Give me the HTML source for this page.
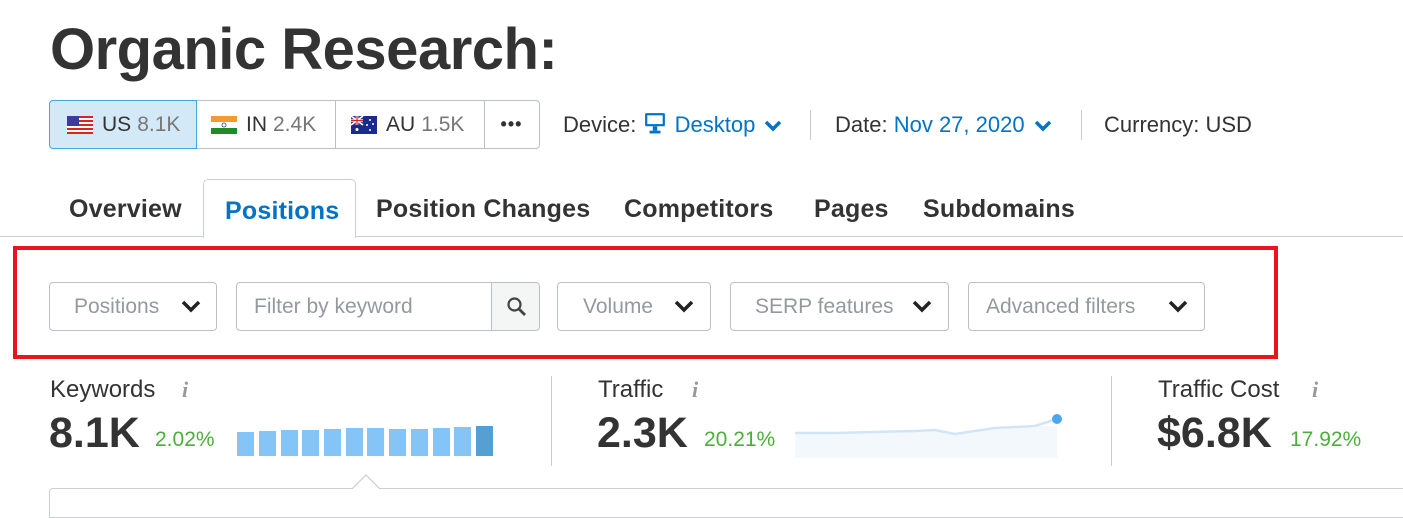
<!DOCTYPE html>
<html><head><meta charset="utf-8"><style>
*{box-sizing:border-box;margin:0;padding:0}
body{width:1403px;height:508px;overflow:hidden;background:#fff;font-family:"Liberation Sans",sans-serif;color:#333;position:relative}
.a{position:absolute;white-space:nowrap}
.seg{position:absolute;top:100px;height:49px;border:1px solid #b8c2c6;display:flex;align-items:center;font-size:21px;color:#333}
.seg .g{color:#777;margin-left:6px}
.flag{width:26px;height:18px;margin-right:9px;display:inline-block}
.tab{position:absolute;top:195px;font-size:25px;font-weight:bold;color:#333;letter-spacing:.2px}
.f{position:absolute;top:282px;height:49px;border:1px solid #b8c2c6;border-radius:4px;font-size:21px;color:#939a9e;display:flex;align-items:center;padding-left:24px}
.chev{position:absolute;top:15px}
.lbl{font-size:24px;color:#333}
.big{font-size:43px;font-weight:bold;color:#333}
.pct{font-size:21px;color:#4cae3a}
.info{font-family:"Liberation Serif",serif;font-style:italic;font-weight:bold;color:#999;font-size:22px}
.ic{vertical-align:-1px;margin-left:8px}
</style></head><body>
<div class="a" style="left:50px;top:16px;font-size:58px;font-weight:bold;color:#333;letter-spacing:-0.5px">Organic Research:</div>

<div class="seg" style="left:49px;width:148px;background:#d4e9f7;border-color:#4aa3df;border-radius:4px 0 0 4px;padding-left:17px;z-index:2">
<svg class="flag" viewBox="0 0 26 18"><rect width="26" height="18" fill="#fff"/><g fill="#d22">
<rect y="0" width="26" height="2"/><rect y="4" width="26" height="2"/><rect y="8" width="26" height="2"/><rect y="12" width="26" height="2"/><rect y="16" width="26" height="2"/></g><rect width="12" height="10" fill="#3c3b9e"/></svg>US<span class="g">8.1K</span></div>
<div class="seg" style="left:196px;width:140px;padding-left:15px;border-left:none">
<svg class="flag" viewBox="0 0 26 18"><rect width="26" height="6" fill="#f49a2f"/><rect y="6" width="26" height="6" fill="#fff"/><rect y="12" width="26" height="6" fill="#1f8a2a"/><circle cx="13" cy="9" r="2" fill="none" stroke="#2a3f9a" stroke-width=".8"/></svg>IN<span class="g">2.4K</span></div>
<div class="seg" style="left:335px;width:150px;padding-left:16px;border-left:none">
<svg class="flag" viewBox="0 0 26 18"><rect width="26" height="18" fill="#1a2b8f"/><rect width="12" height="9" fill="#2b3a9c"/><path d="M0 0L12 9M12 0L0 9" stroke="#fff" stroke-width="1.6"/><path d="M6 0V9M0 4.5H12" stroke="#fff" stroke-width="2.5"/><path d="M6 0V9M0 4.5H12" stroke="#d22" stroke-width="1.2"/><g fill="#fff"><circle cx="6" cy="13.5" r="1.5"/><circle cx="19" cy="4" r="1"/><circle cx="22" cy="8" r="1"/><circle cx="19" cy="14" r="1"/><circle cx="16" cy="9" r="1"/></g></svg>AU<span class="g">1.5K</span></div>
<div class="seg" style="left:484px;width:56px;border-left:none;border-radius:0 4px 4px 0;justify-content:center;font-weight:bold;font-size:18px;letter-spacing:1px">•••</div>

<div class="a" style="left:563px;top:112px;font-size:22px;color:#333">Device: <svg width="22" height="22" viewBox="0 0 20 20" style="vertical-align:-2px;margin:0 2px"><rect x="1" y="1" width="18" height="12" rx="1" fill="#0073c6"/><rect x="3" y="3" width="14" height="8" fill="#fff"/><rect x="8" y="13" width="4" height="4" fill="#0073c6"/><rect x="5" y="17" width="10" height="2.5" fill="#0073c6"/></svg> <span style="color:#0073c6">Desktop</span><svg class="ic" width="20" height="14" viewBox="0 0 20 14"><path d="M3 3l7 7 7-7" fill="none" stroke="#0073c6" stroke-width="3.5"/></svg></div>
<div class="a" style="left:810px;top:110px;width:1px;height:30px;background:#ccc"></div>
<div class="a" style="left:835px;top:112px;font-size:22px">Date: <span style="color:#0073c6">Nov 27, 2020</span><svg class="ic" width="20" height="14" viewBox="0 0 20 14"><path d="M3 3l7 7 7-7" fill="none" stroke="#0073c6" stroke-width="3.5"/></svg></div>
<div class="a" style="left:1081px;top:110px;width:1px;height:30px;background:#ccc"></div>
<div class="a" style="left:1104px;top:112px;font-size:22px">Currency: USD</div>

<div class="a" style="left:0;top:236px;width:1403px;height:1px;background:#c9d0d3"></div>
<div class="a" style="left:203px;top:179px;width:153px;height:59px;border:1px solid #c9d0d3;border-bottom:none;border-radius:5px 5px 0 0;background:#fff"></div>
<div class="tab" style="left:69px">Overview</div>
<div class="tab" style="left:225px;color:#0073c6;top:197px">Positions</div>
<div class="tab" style="left:376px">Position Changes</div>
<div class="tab" style="left:624px">Competitors</div>
<div class="tab" style="left:814px">Pages</div>
<div class="tab" style="left:923px">Subdomains</div>

<div class="a" style="left:13px;top:246px;width:1265px;height:113px;border:4px solid #e8141f"></div>

<div class="f" style="left:49px;width:168px">Positions<svg class="chev" style="left:130px" width="22" height="16" viewBox="0 0 22 16"><path d="M3 4l8 8 8-8" fill="none" stroke="#222" stroke-width="3.5"/></svg></div>
<div class="f" style="left:236px;width:304px;padding-left:17px">Filter by keyword<div style="position:absolute;right:0;top:0;width:48px;height:47px;border-left:1px solid #b8c2c6;background:#f4f5f5;border-radius:0 4px 4px 0"><svg style="position:absolute;left:14px;top:13px" width="22" height="22" viewBox="0 0 22 22"><circle cx="8.5" cy="8.5" r="6" fill="none" stroke="#444" stroke-width="2.2"/><path d="M13 13l6 6" stroke="#444" stroke-width="2.8"/></svg></div></div>
<div class="f" style="left:557px;width:154px;padding-left:25px">Volume<svg class="chev" style="left:115px" width="22" height="16" viewBox="0 0 22 16"><path d="M3 4l8 8 8-8" fill="none" stroke="#222" stroke-width="3.5"/></svg></div>
<div class="f" style="left:730px;width:219px;padding-left:24px">SERP features<svg class="chev" style="left:180px" width="22" height="16" viewBox="0 0 22 16"><path d="M3 4l8 8 8-8" fill="none" stroke="#222" stroke-width="3.5"/></svg></div>
<div class="f" style="left:968px;width:237px;padding-left:17px">Advanced filters<svg class="chev" style="left:198px" width="22" height="16" viewBox="0 0 22 16"><path d="M3 4l8 8 8-8" fill="none" stroke="#222" stroke-width="3.5"/></svg></div>

<div class="a lbl" style="left:50px;top:376px">Keywords</div><div class="a info" style="left:182px;top:377px">i</div>
<div class="a big" style="left:49px;top:409px">8.1K</div>
<div class="a pct" style="left:155px;top:428px">2.02%</div>
<svg class="a" style="left:237px;top:424px" width="258" height="34" viewBox="0 0 258 34">
<g fill="#85c4f7"><rect x="0" y="8" width="17" height="24"/><rect x="22" y="7" width="17" height="25"/><rect x="44" y="6" width="17" height="26"/><rect x="65" y="6" width="17" height="26"/><rect x="87" y="5" width="17" height="27"/><rect x="109" y="4" width="17" height="28"/><rect x="130" y="4" width="17" height="28"/><rect x="152" y="5" width="17" height="27"/><rect x="174" y="5" width="17" height="27"/><rect x="196" y="4" width="17" height="28"/><rect x="217" y="3" width="17" height="29"/></g><rect x="239" y="2" width="17" height="30" fill="#559fd3"/></svg>
<div class="a" style="left:551px;top:376px;width:1px;height:90px;background:#ccc"></div>

<div class="a lbl" style="left:598px;top:376px">Traffic</div><div class="a info" style="left:692px;top:377px">i</div>
<div class="a big" style="left:597px;top:409px">2.3K</div>
<div class="a pct" style="left:704px;top:428px">20.21%</div>
<svg class="a" style="left:795px;top:410px" width="270" height="48" viewBox="0 0 270 48">
<path d="M0 23L40 23 80 22 120 21 140 20 160 24 200 18 240 16 262 16 262 48 0 48Z" fill="#f3f8fd"/>
<path d="M0 23L40 23 80 22 120 21 140 20 160 24 200 18 240 16 262 9" fill="none" stroke="#d0e6f8" stroke-width="2.5"/>
<circle cx="262" cy="9" r="5" fill="#4aa8f2"/></svg>
<div class="a" style="left:1111px;top:376px;width:1px;height:90px;background:#ccc"></div>

<div class="a lbl" style="left:1158px;top:376px">Traffic Cost</div><div class="a info" style="left:1312px;top:377px">i</div>
<div class="a big" style="left:1157px;top:409px">$6.8K</div>
<div class="a pct" style="left:1290px;top:428px">17.92%</div>

<div class="a" style="left:49px;top:488px;width:1360px;height:30px;border:1px solid #c9d0d3;border-radius:4px 0 0 0"></div>
<svg class="a" style="left:352px;top:473px" width="28" height="17" viewBox="0 0 28 17"><path d="M0 16L14 2 28 16" fill="#fff" stroke="#c9d0d3" stroke-width="1.2"/><rect x="1" y="15.5" width="26" height="2" fill="#fff"/></svg>
</body></html>
